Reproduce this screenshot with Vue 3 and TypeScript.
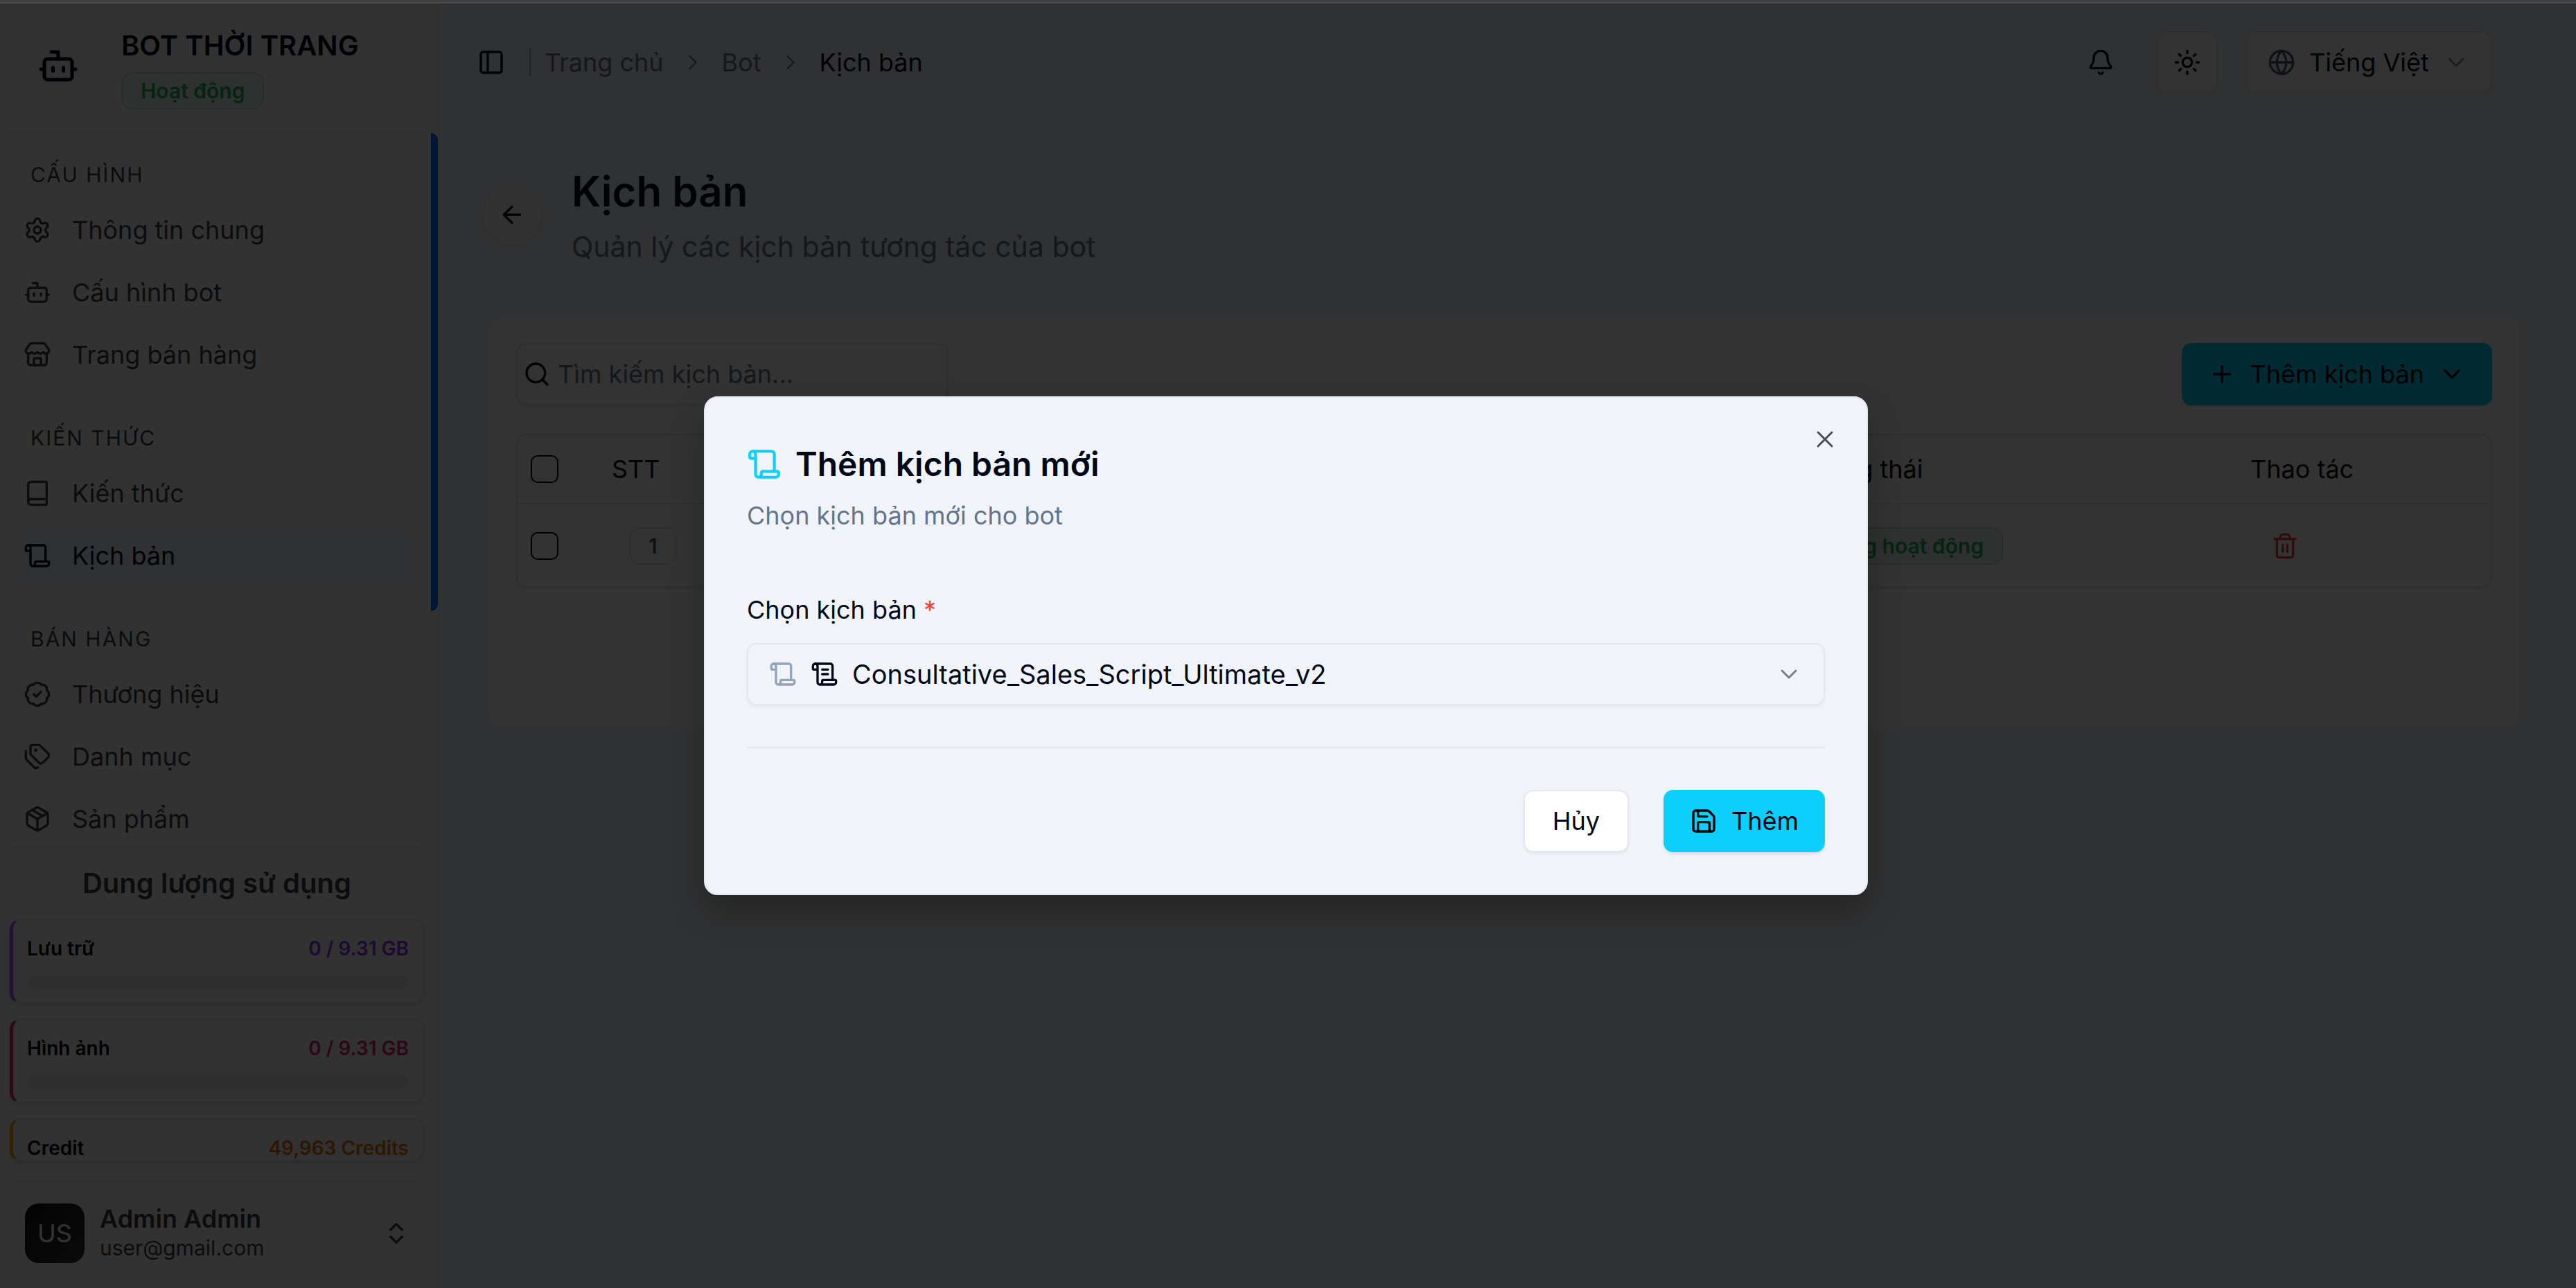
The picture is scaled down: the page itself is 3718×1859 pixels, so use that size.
<script setup lang="ts">
import { h, ref, type FunctionalComponent } from 'vue'

const circle = (cx: number, cy: number, r: number): string =>
  `M${cx - r} ${cy}a${r} ${r} 0 1 0 ${2 * r} 0a${r} ${r} 0 1 0 ${-2 * r} 0`

const scroll: string[] = [
  'M19 17V5a2 2 0 0 0-2-2H4',
  'M8 21h12a2 2 0 0 0 2-2v-1a1 1 0 0 0-1-1H11a1 1 0 0 0-1 1v1a2 2 0 1 1-4 0V5a2 2 0 1 0-4 0v2a1 1 0 0 0 1 1h3',
]

const glyphs: Record<string, string[]> = {
  bot: [
    'M12 8V4H8',
    'M6 8h12a2 2 0 0 1 2 2v8a2 2 0 0 1-2 2H6a2 2 0 0 1-2-2v-8a2 2 0 0 1 2-2z',
    'M2 14h2', 'M20 14h2', 'M15 13v2', 'M9 13v2',
  ],
  settings: [
    'M9.671 4.136a2.34 2.34 0 0 1 4.659 0 2.34 2.34 0 0 0 3.319 1.915 2.34 2.34 0 0 1 2.33 4.033 2.34 2.34 0 0 0 0 3.831 2.34 2.34 0 0 1-2.33 4.033 2.34 2.34 0 0 0-3.319 1.915 2.34 2.34 0 0 1-4.659 0 2.34 2.34 0 0 0-3.32-1.915 2.34 2.34 0 0 1-2.33-4.033 2.34 2.34 0 0 0 0-3.831A2.34 2.34 0 0 1 6.35 6.051a2.34 2.34 0 0 0 3.319-1.915',
    circle(12, 12, 3),
  ],
  store: [
    'M15 21v-5a1 1 0 0 0-1-1h-4a1 1 0 0 0-1 1v5',
    'M17.774 10.31a1.12 1.12 0 0 0-1.549 0 2.5 2.5 0 0 1-3.451 0 1.12 1.12 0 0 0-1.548 0 2.5 2.5 0 0 1-3.452 0 1.12 1.12 0 0 0-1.549 0 2.5 2.5 0 0 1-3.77-3.248l2.889-4.184A2 2 0 0 1 7 2h10a2 2 0 0 1 1.653.873l2.895 4.192a2.5 2.5 0 0 1-3.774 3.244',
    'M4 10.95V19a2 2 0 0 0 2 2h12a2 2 0 0 0 2-2v-8.05',
  ],
  book: ['M4 19.5v-15A2.5 2.5 0 0 1 6.5 2H19a1 1 0 0 1 1 1v18a1 1 0 0 1-1 1H6.5a1 1 0 0 1 0-5H20'],
  scroll,
  scrollText: ['M15 12h-5', 'M15 8h-5', ...scroll],
  badgeCheck: [
    'M3.85 8.62a4 4 0 0 1 4.78-4.77 4 4 0 0 1 6.74 0 4 4 0 0 1 4.78 4.78 4 4 0 0 1 0 6.74 4 4 0 0 1-4.77 4.78 4 4 0 0 1-6.75 0 4 4 0 0 1-4.78-4.77 4 4 0 0 1 0-6.76Z',
    'm9 12 2 2 4-4',
  ],
  tags: [
    'M13.172 2a2 2 0 0 1 1.414.586l6.71 6.71a2.4 2.4 0 0 1 0 3.408l-4.592 4.592a2.4 2.4 0 0 1-3.408 0l-6.71-6.71A2 2 0 0 1 6 9.172V3a1 1 0 0 1 1-1z',
    'M2 7v6.172a2 2 0 0 0 .586 1.414l6.71 6.71a2.4 2.4 0 0 0 3.191.193',
    circle(10.5, 6.5, 0.5),
  ],
  package: [
    'M11 21.73a2 2 0 0 0 2 0l7-4A2 2 0 0 0 21 16V8a2 2 0 0 0-1-1.73l-7-4a2 2 0 0 0-2 0l-7 4A2 2 0 0 0 3 8v8a2 2 0 0 0 1 1.73z',
    'M12 22V12', 'M3.29 7 12 12 20.71 7', 'm7.5 4.27 9 5.15',
  ],
  upDown: ['m7 15 5 5 5-5', 'm7 9 5-5 5 5'],
  panel: ['M5 3h14a2 2 0 0 1 2 2v14a2 2 0 0 1-2 2H5a2 2 0 0 1-2-2V5a2 2 0 0 1 2-2z', 'M9 3v18'],
  chevronRight: ['m9 18 6-6-6-6'],
  chevronDown: ['m6 9 6 6 6-6'],
  bell: [
    'M10.268 21a2 2 0 0 0 3.464 0',
    'M3.262 15.326A1 1 0 0 0 4 17h16a1 1 0 0 0 .74-1.673C19.41 13.956 18 12.499 18 8A6 6 0 0 0 6 8c0 4.499-1.411 5.956-2.738 7.326',
  ],
  sun: [
    circle(12, 12, 4),
    'M12 2v2', 'M12 20v2', 'm4.93 4.93 1.41 1.41', 'm17.66 17.66 1.41 1.41',
    'M2 12h2', 'M20 12h2', 'm6.34 17.66-1.41 1.41', 'm19.07 4.93-1.41 1.41',
  ],
  globe: [circle(12, 12, 10), 'M12 2a14.5 14.5 0 0 0 0 20 14.5 14.5 0 0 0 0-20', 'M2 12h20'],
  arrowLeft: ['m12 19-7-7 7-7', 'M19 12H5'],
  search: [circle(11, 11, 8), 'm21 21-4.3-4.3'],
  plus: ['M5 12h14', 'M12 5v14'],
  trash: [
    'M3 6h18', 'M19 6v14c0 1-1 2-2 2H7c-1 0-2-1-2-2V6',
    'M8 6V4c0-1 1-2 2-2h4c1 0 2 1 2 2v2', 'M10 11v6', 'M14 11v6',
  ],
  close: ['M18 6 6 18', 'm6 6 12 12'],
  save: [
    'M15.2 3a2 2 0 0 1 1.4.6l3.8 3.8a2 2 0 0 1 .6 1.4V19a2 2 0 0 1-2 2H5a2 2 0 0 1-2-2V5a2 2 0 0 1 2-2z',
    'M17 21v-7a1 1 0 0 0-1-1H8a1 1 0 0 0-1 1v7', 'M7 3v4a1 1 0 0 0 1 1h7',
  ],
}

const Icon: FunctionalComponent<{ name: string; stroke?: number }> = (props) =>
  h(
    'svg',
    {
      viewBox: '0 0 24 24',
      fill: 'none',
      stroke: 'currentColor',
      'stroke-width': props.stroke ?? 2,
      'stroke-linecap': 'round',
      'stroke-linejoin': 'round',
      'aria-hidden': 'true',
    },
    glyphs[props.name].map((d) => h('path', { d })),
  )
Icon.props = ['name', 'stroke']

interface NavItem { label: string; icon: string; active?: boolean }
interface NavGroup { title: string; items: NavItem[] }

const groups: NavGroup[] = [
  {
    title: 'CẤU HÌNH',
    items: [
      { label: 'Thông tin chung', icon: 'settings' },
      { label: 'Cấu hình bot', icon: 'bot' },
      { label: 'Trang bán hàng', icon: 'store' },
    ],
  },
  {
    title: 'KIẾN THỨC',
    items: [
      { label: 'Kiến thức', icon: 'book' },
      { label: 'Kịch bản', icon: 'scroll', active: true },
    ],
  },
  {
    title: 'BÁN HÀNG',
    items: [
      { label: 'Thương hiệu', icon: 'badgeCheck' },
      { label: 'Danh mục', icon: 'tags' },
      { label: 'Sản phẩm', icon: 'package' },
    ],
  },
]

const quotas = [
  { label: 'Lưu trữ', value: '0 / 9.31 GB', tone: 'purple' },
  { label: 'Hình ảnh', value: '0 / 9.31 GB', tone: 'pink' },
  { label: 'Credit', value: '49,963 Credits', tone: 'amber' },
]

const script = ref('Consultative_Sales_Script_Ultimate_v2')
const language = ref('Tiếng Việt')
const keyword = ref('')
</script>

<template>
  <div class="window">
    <div class="window-edge"></div>
    <div class="stage">
      <div class="app">
        <aside class="sidebar">
          <header class="bot-head">
            <span class="bot-avatar"><Icon name="bot" class="icon-lg" /></span>
            <div class="bot-info">
              <strong class="bot-name">BOT THỜI TRANG</strong>
              <span class="badge badge-green">Hoạt động</span>
            </div>
          </header>

          <nav class="nav">
            <section v-for="group in groups" :key="group.title" class="nav-group">
              <h2 class="nav-title">{{ group.title }}</h2>
              <ul class="nav-list">
                <li v-for="item in group.items" :key="item.label">
                  <a href="#" class="nav-link" :class="{ active: item.active }">
                    <Icon :name="item.icon" class="icon" />
                    <span>{{ item.label }}</span>
                  </a>
                </li>
              </ul>
            </section>
            <span class="nav-thumb"></span>
          </nav>

          <section class="usage">
            <h2 class="usage-title">Dung lượng sử dụng</h2>
            <div class="usage-list">
              <article v-for="q in quotas" :key="q.label" class="quota" :class="q.tone">
                <div class="quota-row">
                  <span class="quota-label">{{ q.label }}</span>
                  <span class="quota-value">{{ q.value }}</span>
                </div>
                <div v-if="q.tone !== 'amber'" class="quota-track"></div>
              </article>
            </div>
          </section>

          <footer class="user">
            <span class="user-avatar">US</span>
            <div class="user-info">
              <strong>Admin Admin</strong>
              <span class="user-mail">user@gmail.com</span>
            </div>
            <Icon name="upDown" class="icon" />
          </footer>
        </aside>

        <main class="main">
          <header class="topbar">
            <button type="button" class="plain-btn" aria-label="Thu gọn thanh bên"><Icon name="panel" class="icon" /></button>
            <span class="separator"></span>
            <nav class="crumbs" aria-label="Đường dẫn">
              <a href="#">Trang chủ</a>
              <Icon name="chevronRight" class="icon-sm" :stroke="1.5" />
              <a href="#">Bot</a>
              <Icon name="chevronRight" class="icon-sm" :stroke="1.5" />
              <span class="crumb-current">Kịch bản</span>
            </nav>
            <div class="top-actions">
              <button type="button" class="plain-btn" aria-label="Thông báo"><Icon name="bell" class="icon" /></button>
              <button type="button" class="square-btn" aria-label="Giao diện"><Icon name="sun" class="icon" /></button>
              <div class="language">
                <Icon name="globe" class="icon slate" />
                <select v-model="language" aria-label="Ngôn ngữ">
                  <option>Tiếng Việt</option>
                </select>
                <Icon name="chevronDown" class="icon faded" :stroke="1.5" />
              </div>
            </div>
          </header>

          <div class="heading">
            <button type="button" class="back-btn" aria-label="Quay lại"><Icon name="arrowLeft" class="icon" /></button>
            <div class="heading-text">
              <h1>Kịch bản</h1>
              <p>Quản lý các kịch bản tương tác của bot</p>
            </div>
          </div>

          <section class="panel">
            <div class="toolbar">
              <label class="search">
                <Icon name="search" class="icon" />
                <input v-model="keyword" type="text" placeholder="Tìm kiếm kịch bản..." />
              </label>
              <button type="button" class="primary-btn">
                <Icon name="plus" class="icon" />
                <span>Thêm kịch bản</span>
                <Icon name="chevronDown" class="icon" />
              </button>
            </div>

            <div class="table-frame">
              <table>
                <thead>
                  <tr>
                    <th class="col-check"><input type="checkbox" aria-label="Chọn tất cả" /></th>
                    <th class="col-index">STT</th>
                    <th></th>
                    <th class="col-status">Trạng thái</th>
                    <th class="col-action">Thao tác</th>
                  </tr>
                </thead>
                <tbody>
                  <tr>
                    <td class="col-check"><input type="checkbox" aria-label="Chọn dòng 1" /></td>
                    <td class="col-index"><span class="badge badge-plain">1</span></td>
                    <td></td>
                    <td class="col-status"><span class="badge badge-green">Đang hoạt động</span></td>
                    <td class="col-action">
                      <button type="button" class="plain-btn danger" aria-label="Xóa"><Icon name="trash" class="icon" /></button>
                    </td>
                  </tr>
                </tbody>
              </table>
            </div>
          </section>
        </main>
      </div>

      <div class="overlay">
        <form class="dialog" role="dialog" aria-modal="true" aria-labelledby="dialog-title" @submit.prevent>
          <button type="button" class="plain-btn dialog-close" aria-label="Đóng"><Icon name="close" class="icon" :stroke="1.75" /></button>
          <h2 id="dialog-title" class="dialog-title"><Icon name="scroll" class="icon-md" />Thêm kịch bản mới</h2>
          <p class="dialog-text">Chọn kịch bản mới cho bot</p>
          <label for="script" class="dialog-label">Chọn kịch bản <span class="required">*</span></label>
          <div class="script-select">
            <Icon name="scroll" class="icon soft" />
            <Icon name="scrollText" class="icon" />
            <select id="script" v-model="script">
              <option>Consultative_Sales_Script_Ultimate_v2</option>
            </select>
            <Icon name="chevronDown" class="icon faded" :stroke="1.75" />
          </div>
          <div class="dialog-actions">
            <button type="button" class="outline-btn">Hủy</button>
            <button type="submit" class="primary-btn"><Icon name="save" class="icon" /><span>Thêm</span></button>
          </div>
        </form>
      </div>
    </div>
  </div>
</template>

<style>
body {
  background: #303132;
}
</style>

<style scoped>
* {
  box-sizing: border-box;
  margin: 0;
}

.window {
  display: flex;
  flex-direction: column;
  height: 100vh;
  font-family: Inter, "Noto Sans", sans-serif;
  font-size: 36px;
  line-height: 48px;
  color: #020817;
}

.window-edge {
  flex: none;
  height: 5px;
  background: #3f3f3f;
  border-bottom: 2px solid #4a4d4c;
}

.stage {
  position: relative;
  flex: 1;
  min-height: 0;
}

.app {
  display: flex;
  height: 100%;
  background: #f1f5f9;
}

a {
  color: inherit;
  text-decoration: none;
}

button,
select,
input {
  font: inherit;
  color: inherit;
}

button {
  display: flex;
  align-items: center;
  justify-content: center;
  padding: 0;
  border: 0;
  background: none;
}

select {
  flex: 1;
  min-width: 0;
  padding: 0;
  border: 0;
  background: none;
  appearance: none;
}

.icon { flex: none; width: 40px; height: 40px; }
.icon-sm { flex: none; width: 36px; height: 36px; }
.icon-md { flex: none; width: 50px; height: 50px; color: #0acfff; }
.icon-lg { flex: none; width: 60px; height: 60px; }
.faded { opacity: 0.5; }
.soft { color: #94a3b8; }
.slate { color: #475569; }

.badge {
  display: inline-block;
  padding: 2px 26px;
  border: 2px solid #dde3ea;
  border-radius: 16px;
  font-size: 30px;
  font-weight: 600;
  line-height: 46px;
}

.badge-green {
  color: #1fb355;
  background: #e8f3ee;
  border-color: #c4e2d1;
}

.badge-plain {
  color: #475569;
}

/* Sidebar */
.sidebar {
  display: flex;
  flex: none;
  flex-direction: column;
  width: 634px;
  background: #fafafa;
  border-right: 2px solid #e2e8f0;
}

.bot-head {
  display: flex;
  align-items: flex-start;
  gap: 32px;
  height: 187px;
  margin: 0 20px 0 15px;
  padding: 31px 0 0 10px;
  border-bottom: 2px solid #e2e8f0;
}

.bot-avatar {
  display: flex;
  align-items: center;
  justify-content: center;
  width: 118px;
  height: 118px;
  border-radius: 50%;
  background: #f4f6fa;
}

.bot-info {
  display: flex;
  flex-direction: column;
  align-items: flex-start;
  gap: 14px;
  padding-top: 6px;
}

.bot-name {
  font-size: 40px;
  font-weight: 600;
  line-height: 48px;
}

.nav {
  position: relative;
  flex: 1;
  min-height: 0;
  overflow: hidden;
  color: #3f3f46;
}

.nav-group {
  padding: 22px 28px 22px 18px;
}

.nav-title {
  padding-left: 26px;
  margin-bottom: 4px;
  font-size: 30px;
  font-weight: 400;
  line-height: 76px;
  letter-spacing: 2px;
}

.nav-list {
  display: flex;
  flex-direction: column;
  gap: 14px;
  padding: 0;
  list-style: none;
}

.nav-link {
  display: flex;
  align-items: center;
  gap: 30px;
  height: 76px;
  padding-left: 16px;
  border-radius: 14px;
}

.nav-link.active {
  color: #020817;
  background: #f1f5f9;
}

.nav-thumb {
  position: absolute;
  top: 0;
  right: 0;
  width: 10px;
  height: 690px;
  border-radius: 0 10px 10px 0;
  background: #0078ff;
}

.usage {
  flex: none;
  margin: 0 20px 0 14px;
  padding-bottom: 22px;
  border-top: 2px solid #e2e8f0;
  border-bottom: 2px solid #e2e8f0;
}

.usage-title {
  padding: 20px 0;
  font-size: 40px;
  font-weight: 600;
  line-height: 62px;
  text-align: center;
  color: #3f3f46;
}

.usage-list {
  display: flex;
  flex-direction: column;
  gap: 22px;
}

.quota {
  height: 122px;
  padding: 20px 20px 0;
  border: 2px solid #dfe3e9;
  border-left: 5px solid;
  border-radius: 16px;
  background: #fafafa;
  box-shadow: 0 3px 6px rgba(0, 0, 0, 0.15);
  font-size: 28px;
  font-weight: 600;
  line-height: 42px;
}

.quota-row {
  display: flex;
  justify-content: space-between;
}

.quota-label { color: #020817; }

.quota-track {
  height: 20px;
  margin-top: 18px;
  border-radius: 10px;
  background: #e6e6e6;
}

.purple { border-left-color: #a855f7; color: #9333ea; }
.pink { border-left-color: #db2777; color: #db2777; }
.amber { height: 62px; border-left-color: #f59e0b; color: #d97706; }

.user {
  display: flex;
  flex: none;
  align-items: center;
  gap: 22px;
  height: 159px;
  padding: 0 40px 0 36px;
  color: #3f3f46;
}

.user-avatar {
  display: flex;
  align-items: center;
  justify-content: center;
  width: 86px;
  height: 86px;
  border-radius: 20px;
  background: linear-gradient(135deg, #111113, #36363c);
  color: #ffffff;
}

.user-info {
  display: flex;
  flex: 1;
  flex-direction: column;
  line-height: 42px;
}

.user-info strong { font-weight: 600; }
.user-mail { font-size: 30px; }

/* Main */
.main {
  flex: 1;
  min-width: 0;
  padding: 41px 80px 0 70px;
}

.topbar {
  display: flex;
  align-items: center;
  height: 88px;
  padding-right: 41px;
}

.topbar > .plain-btn { margin-left: -15px; }

.separator {
  width: 2px;
  height: 40px;
  margin: 0 20px 0 35px;
  background: #a1a8b3;
}

.crumbs {
  display: flex;
  align-items: center;
  gap: 24px;
  color: #64748b;
}

.crumb-current { color: #020817; }

.top-actions {
  display: flex;
  align-items: center;
  margin-left: auto;
}

.square-btn,
.language {
  height: 90px;
  border: 2px solid #dde3ea;
  border-radius: 16px;
  background: #ffffff;
  box-shadow: 0 3px 4px rgba(0, 0, 0, 0.06);
}

.square-btn {
  width: 88px;
  margin: 0 40px 0 61px;
}

.language {
  display: flex;
  align-items: center;
  gap: 20px;
  width: 356px;
  padding: 0 30px;
}

.heading {
  display: flex;
  align-items: center;
  gap: 42px;
  margin: 100px 0 70px;
}

.heading-text {
  display: flex;
  flex-direction: column;
  gap: 8px;
}

.back-btn {
  width: 88px;
  height: 88px;
  margin-left: -9px;
  border: 2px solid #e2e8f0;
  border-radius: 50%;
  background: #fafafa;
  box-shadow: 0 3px 6px rgba(0, 0, 0, 0.06);
}

h1 {
  font-size: 60px;
  font-weight: 600;
  line-height: 84px;
}

.heading p {
  font-size: 41px;
  line-height: 60px;
  color: #64748b;
}

.panel {
  min-height: 594px;
  padding: 39px 41px;
  border-radius: 24px;
  background: #ffffff;
}

.toolbar {
  display: flex;
  justify-content: space-between;
  margin-bottom: 41px;
}

.search {
  display: flex;
  align-items: center;
  gap: 10px;
  width: 623px;
  height: 90px;
  padding: 0 8px;
  border: 2px solid #dde3ea;
  border-radius: 14px;
  box-shadow: 0 3px 4px rgba(0, 0, 0, 0.04);
}

.search input {
  flex: 1;
  min-width: 0;
  padding: 0;
  border: 0;
  background: none;
}

.search input::placeholder {
  color: #64748b;
  opacity: 1;
}

.primary-btn {
  gap: 20px;
  height: 90px;
  padding: 0 38px;
  border-radius: 14px;
  background: #0acfff;
  color: #000000;
  box-shadow: 0 3px 4px rgba(0, 0, 0, 0.08);
}

.table-frame {
  border: 2px solid #dde3ea;
  border-radius: 16px;
}

table {
  width: 100%;
  border-collapse: collapse;
  table-layout: fixed;
}

th {
  height: 99px;
  padding: 0;
  font-weight: 400;
  text-align: left;
  border-bottom: 2px solid #dde3ea;
}

td {
  height: 120px;
  padding: 0;
}

.col-check { width: 136px; padding-left: 19px; }
.col-index { width: 370px; }
td.col-index { padding-left: 25px; }
.col-status { width: 647px; padding-left: 4px; }
.col-action { width: 347px; }
td.col-action { padding-left: 30px; }

.danger { color: #ef4444; }

input[type="checkbox"] {
  display: block;
  width: 40px;
  height: 40px;
  margin: 0;
  border: 2px solid #020817;
  border-radius: 10px;
  appearance: none;
}

/* Dialog */
.overlay {
  position: absolute;
  inset: 0;
  display: flex;
  align-items: center;
  justify-content: center;
  padding-right: 6px;
  background: rgba(0, 0, 0, 0.8);
}

.dialog {
  position: relative;
  width: 1680px;
  padding: 58px 60px 60px;
  border: 2px solid #e2e8f0;
  border-radius: 20px;
  background: #f0f4f9;
  box-shadow: 0 24px 48px rgba(0, 0, 0, 0.25);
}

.dialog-close {
  position: absolute;
  top: 40px;
  right: 40px;
  color: #484b59;
}

.dialog-title {
  display: flex;
  align-items: center;
  gap: 20px;
  font-size: 48px;
  font-weight: 600;
  line-height: 76px;
}

.dialog-text {
  margin: 12px 0 88px;
  color: #64748b;
}

.dialog-label {
  display: block;
  margin-bottom: 24px;
}

.required { color: #ef4444; }

.script-select {
  display: flex;
  align-items: center;
  gap: 20px;
  height: 90px;
  padding: 0 30px;
  border: 2px solid #e2e8f0;
  border-radius: 14px;
  font-size: 38px;
  box-shadow: 0 3px 4px rgba(0, 0, 0, 0.05);
}

.dialog-actions {
  display: flex;
  justify-content: flex-end;
  gap: 50px;
  margin-top: 60px;
  padding-top: 60px;
  border-top: 2px solid #e2e8f0;
}

.outline-btn {
  height: 90px;
  padding: 0 40px;
  border: 2px solid #e2e8f0;
  border-radius: 14px;
  background: #ffffff;
  box-shadow: 0 3px 4px rgba(0, 0, 0, 0.05);
}
</style>
